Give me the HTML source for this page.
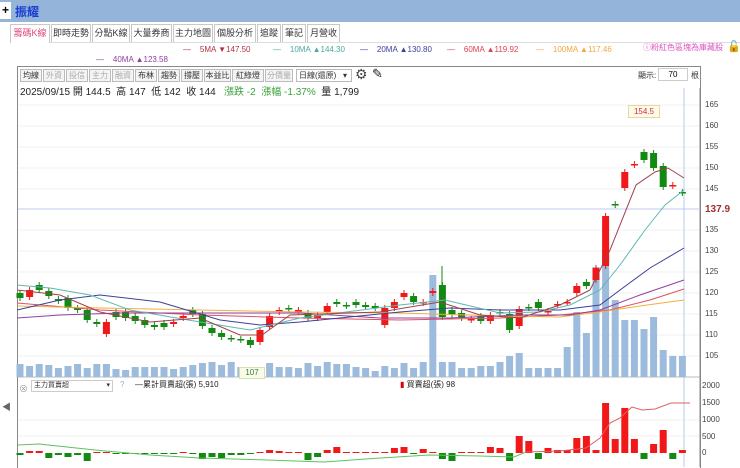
<!DOCTYPE html>
<html><head><meta charset="utf-8">
<style>
*{margin:0;padding:0;box-sizing:border-box}
body{width:740px;height:467px;overflow:hidden;background:#fff;font-family:"Liberation Sans","Noto Sans CJK TC",sans-serif;position:relative}
.abs{position:absolute}
.tab{position:absolute;top:24px;height:18px;border:1px solid #c8c8c8;border-bottom:none;font-size:9px;line-height:17px;text-align:center;color:#333;background:#fff;white-space:nowrap;overflow:hidden}
.tb{position:absolute;top:69px;height:13px;border:1px solid #bbb;font-size:8px;line-height:11px;text-align:center;color:#333;background:#f4f4f4;white-space:nowrap;overflow:hidden}
.tb.d{color:#aaa}
.lg{position:absolute;font-size:8px;white-space:nowrap}
.ax{position:absolute;left:705px;font-size:8px;color:#444}
.ax2{position:absolute;left:702px;font-size:8px;color:#444}
</style></head><body>
<div class="abs" style="left:0;top:0;width:740px;height:22px;background:#94b4d9"></div>
<div class="abs" style="left:0;top:2px;width:11px;height:17px;background:#fff;font-size:12px;font-weight:bold;line-height:16px;text-align:center">+</div>
<div class="abs" style="left:15px;top:3px;font-size:12px;font-weight:bold;color:#1a3fd0">振耀</div>
<div class="abs" style="left:10px;top:42px;width:730px;height:1px;background:#ddd"></div>
<div class="tab" style="left:10px;width:40px;color:#e0457b;height:19px">籌碼K線</div>
<div class="tab" style="left:51px;width:40px">即時走勢</div>
<div class="tab" style="left:92px;width:38px">分點K線</div>
<div class="tab" style="left:131px;width:41px">大量券商</div>
<div class="tab" style="left:173px;width:40px">主力地圖</div>
<div class="tab" style="left:214px;width:42px">個股分析</div>
<div class="tab" style="left:257px;width:24px">追蹤</div>
<div class="tab" style="left:282px;width:24px">筆記</div>
<div class="tab" style="left:307px;width:33px">月營收</div>

<div class="lg" style="left:183px;top:45px;color:#b03040">—&nbsp;&nbsp;&nbsp;&nbsp;5MA ▼147.50</div>
<div class="lg" style="left:273px;top:45px;color:#4aa9a0">—&nbsp;&nbsp;&nbsp;&nbsp;10MA ▲144.30</div>
<div class="lg" style="left:360px;top:45px;color:#3c3f9a">—&nbsp;&nbsp;&nbsp;&nbsp;20MA ▲130.80</div>
<div class="lg" style="left:447px;top:45px;color:#e04050">—&nbsp;&nbsp;&nbsp;&nbsp;60MA ▲119.92</div>
<div class="lg" style="left:536px;top:45px;color:#f0a840">—&nbsp;&nbsp;&nbsp;&nbsp;100MA ▲117.46</div>
<div class="lg" style="left:96px;top:55px;color:#9040a0">—&nbsp;&nbsp;&nbsp;&nbsp;40MA ▲123.58</div>
<div class="lg" style="left:643px;top:42px;color:#e050c0;font-size:8px">ⓘ粉紅色區塊為庫藏股</div>
<div class="lg" style="left:727px;top:40px;font-size:11px">🔓</div>

<div class="abs" style="left:17px;top:66px;width:684px;height:402px;border:1px solid #888;border-bottom:none"></div>
<div class="tb" style="left:20px;width:22px">均線</div>
<div class="tb d" style="left:43px;width:22px">外資</div>
<div class="tb d" style="left:66px;width:22px">投信</div>
<div class="tb d" style="left:89px;width:22px">主力</div>
<div class="tb d" style="left:112px;width:22px">融資</div>
<div class="tb" style="left:135px;width:22px">布林</div>
<div class="tb" style="left:158px;width:22px">趨勢</div>
<div class="tb" style="left:181px;width:22px">撐壓</div>
<div class="tb" style="left:204px;width:27px">本益比</div>
<div class="tb" style="left:232px;width:32px">紅綠燈</div>
<div class="tb d" style="left:265px;width:28px">分價量</div>
<div class="tb" style="left:296px;width:56px;text-align:left;padding-left:2px;background:#fff">日線(還原) &nbsp;&nbsp;▾</div>
<div class="abs" style="left:355px;top:66px;font-size:14px;color:#444">⚙</div>
<div class="abs" style="left:372px;top:66px;font-size:13px;color:#222">✎</div>
<div class="abs" style="left:638px;top:70px;font-size:8px;color:#333">顯示:</div>
<div class="abs" style="left:658px;top:68px;width:30px;height:13px;border:1px solid #ccc;font-size:8px;text-align:center;line-height:11px">70</div>
<div class="abs" style="left:691px;top:70px;font-size:8px;color:#333">根</div>
<div class="abs" style="left:20px;top:83px;font-size:10px;color:#222;white-space:nowrap">2025/09/15 開 144.5 &nbsp;高 147 &nbsp;低 142 &nbsp;收 144 &nbsp;&nbsp;<span style="color:#3aa03a">漲跌 -2 &nbsp;漲幅 -1.37%</span> &nbsp;量 1,799</div>

<div class="ax" style="top:100px">165</div>
<div class="ax" style="top:121px">160</div>
<div class="ax" style="top:142px">155</div>
<div class="ax" style="top:163px">150</div>
<div class="ax" style="top:184px">145</div>
<div class="ax" style="top:204px;color:#a03030;font-size:10px;font-weight:bold">137.9</div>
<div class="ax" style="top:225px">135</div>
<div class="ax" style="top:246px">130</div>
<div class="ax" style="top:267px">125</div>
<div class="ax" style="top:288px">120</div>
<div class="ax" style="top:309px">115</div>
<div class="ax" style="top:330px">110</div>
<div class="ax" style="top:351px">105</div>
<div class="ax2" style="top:381px">2000</div>
<div class="ax2" style="top:398px">1500</div>
<div class="ax2" style="top:415px">1000</div>
<div class="ax2" style="top:432px">500</div>
<div class="ax2" style="top:448px">0</div>
<div class="abs" style="left:2px;top:400px;font-size:9px;color:#666">◀</div>

<svg id="c" class="abs" style="left:0;top:0" width="740" height="467"></svg>

<div class="abs" style="left:628px;top:105px;width:32px;height:13px;border:1px solid #e8d8a0;background:#fffbea;font-size:8px;color:#d03030;text-align:center;line-height:11px">154.5</div>
<div class="abs" style="left:239px;top:367px;width:26px;height:12px;border:1px solid #d8e0b0;background:#f8fbe8;font-size:8px;color:#3a7a3a;text-align:center;line-height:10px">107</div>

<div class="abs" style="left:19px;top:382px;font-size:9px;color:#999">⊗</div>
<div class="abs" style="left:31px;top:380px;width:82px;height:12px;border:1px solid #ccc;font-size:7px;line-height:10px;padding-left:2px;color:#333;background:#fff">主力買賣超<span style="float:right;padding-right:2px">▾</span></div>
<div class="abs" style="left:120px;top:380px;font-size:8px;color:#9ab">?</div>
<div class="abs" style="left:135px;top:379px;font-size:8px;color:#222">—累計買賣超(張) 5,910</div>
<div class="abs" style="left:400px;top:379px;font-size:8px;color:#222"><span style="color:#d00">▮</span> 買賣超(張) 98</div>

<script>
var s='';
function L(x1,y1,x2,y2,c,w){s+='<line x1="'+x1+'" y1="'+y1+'" x2="'+x2+'" y2="'+y2+'" stroke="'+c+'" stroke-width="'+(w||1)+'"/>';}
function R(x,y,w,h,c){s+='<rect x="'+x+'" y="'+y+'" width="'+w+'" height="'+h+'" fill="'+c+'"/>';}
[105,126,147,168,189,230,251,272,293,314,335,356].forEach(function(y){L(18,y,700,y,'#f0f0f0');});
[420,436].forEach(function(y){L(18,y,700,y,'#f0f0f0');});
L(18,377,700,377,'#bbb');
L(700,88,700,467,'#888');
L(18,209,700,209,'#c0c8f0');
L(684,88,684,467,'#b8c8f0');
var vt=[364,366,364,365,368,366,364,368,364,364,369,370,367,367,367,367,369,367,365,363,362,365,362,367,368,370,363,367,367,368,363,366,362,364,364,367,368,371,366,368,363,368,362,275,362,362,368,368,366,366,362,356,353,368,368,368,368,347,312,333,267,250,300,320,320,329,317,350,356,356];
var red=[0,1,0,0,0,0,0,0,0,1,0,0,0,0,0,0,1,1,0,0,0,0,0,0,0,1,1,1,0,1,0,1,1,0,0,0,0,0,1,1,1,0,1,1,0,0,0,1,0,1,0,0,1,0,0,1,1,1,1,0,1,1,0,1,1,0,0,0,1,0];
var bt=[293,290,285,291,299,298,308,310,322,322,312,312,316,320,325,323,322,316,310,314,328,333,338,339,340,330,316,310,308,310,313,315,306,302,305,302,305,306,308,302,293,296,302,291,285,310,313,319,316,315,312,314,309,307,302,311,304,302,286,282,268,216,204,172,164,152,153,166,185,192];
var bb=[298,297,290,296,301,308,310,320,324,334,317,318,321,325,327,327,324,318,314,326,333,337,339,340,345,342,327,312,309,311,318,318,312,304,306,305,307,308,325,308,297,302,303,293,317,315,318,320,321,321,313,330,326,308,308,312,305,303,293,286,280,266,205,188,165,160,168,187,186,193];
var n=70;
for(var i=0;i<n;i++){
 var x=20+i*9.6;
 R(x-3.5,vt[i],7,377-vt[i],'#9dbbdc');
 var c=red[i]?'#f01818':'#128a12';
 var t=bt[i],b=bb[i];
 L(x,t-3,x,b+3,c);
 R(x-3.5,t,7,Math.max(1.5,b-t),c);
}
L(442,266,442,285,'#128a12');
function P(pts,c){s+='<polyline fill="none" stroke="'+c+'" stroke-width="1" points="'+pts+'"/>';}
P('17,303 100,310 200,315 300,318 400,320 500,318 560,315 610,310 650,300 684,289','#e05060');
P('17,306 100,308 200,310 300,312 400,313 500,316 560,317 600,312 640,306 684,300','#f0b040');
P('17,318 60,315 120,313 200,313 300,313 380,318 450,318 520,315 570,315 600,310 640,295 684,280','#9040a0');
P('17,310 60,300 100,295 160,302 220,320 260,325 300,322 400,312 450,308 500,310 560,310 600,305 620,290 650,268 684,248','#3c3f9a');
P('17,285 50,288 90,295 130,310 200,322 250,330 300,318 400,305 445,300 500,313 540,312 570,305 600,290 620,265 645,230 665,205 684,190','#5fb8b0');
P('17,290 60,295 100,312 150,322 200,318 240,335 262,335 290,315 380,312 440,302 480,315 520,318 560,305 590,290 610,250 636,185 655,172 668,168 684,178','#a0404a');
var v=new Array(70).fill(0);
var set={0:-2,1:2,2:2,3:-5,4:-2,5:-4,6:-2,7:-8,8:1,9:1,10:-1,11:-1,12:-1,13:-1,14:-1,15:-1,16:-1,17:1,18:-1,19:-6,20:-4,21:-5,22:-2,23:-2,24:-1,25:1,26:3,27:2,28:1,29:1,30:-7,31:-4,32:3,33:6,34:1,35:1,36:1,37:1,38:1,39:5,40:6,41:-1,42:4,43:1,44:-6,45:-8,46:1,47:1,48:1,49:6,50:5,51:-8,52:17,53:12,54:-6,55:5,56:3,57:3,58:15,59:17,60:3,61:50,62:14,63:45,64:14,65:-6,66:9,67:23,68:-6,69:3};
for(var k in set)v[k]=set[k];
for(var i=0;i<n;i++){var x=20+i*9.6,h=v[i];var c=h>=0?'#f01818':'#128a12';
 if(h>=0)R(x-3.5,453-Math.max(h,1),7,Math.max(h,1),c);else R(x-3.5,453,7,-h,c);}
P('18,445 39,444 95,450 150,455 200,458 267,460 324,462 380,458 429,455 480,456 514,457 526,452','#60c060');
P('526,452 560,451 586,448 600,438 610,423 620,418 632,407 642,410 655,409 671,403 690,403','#e06060');
document.getElementById('c').innerHTML=s;
</script>
</body></html>
